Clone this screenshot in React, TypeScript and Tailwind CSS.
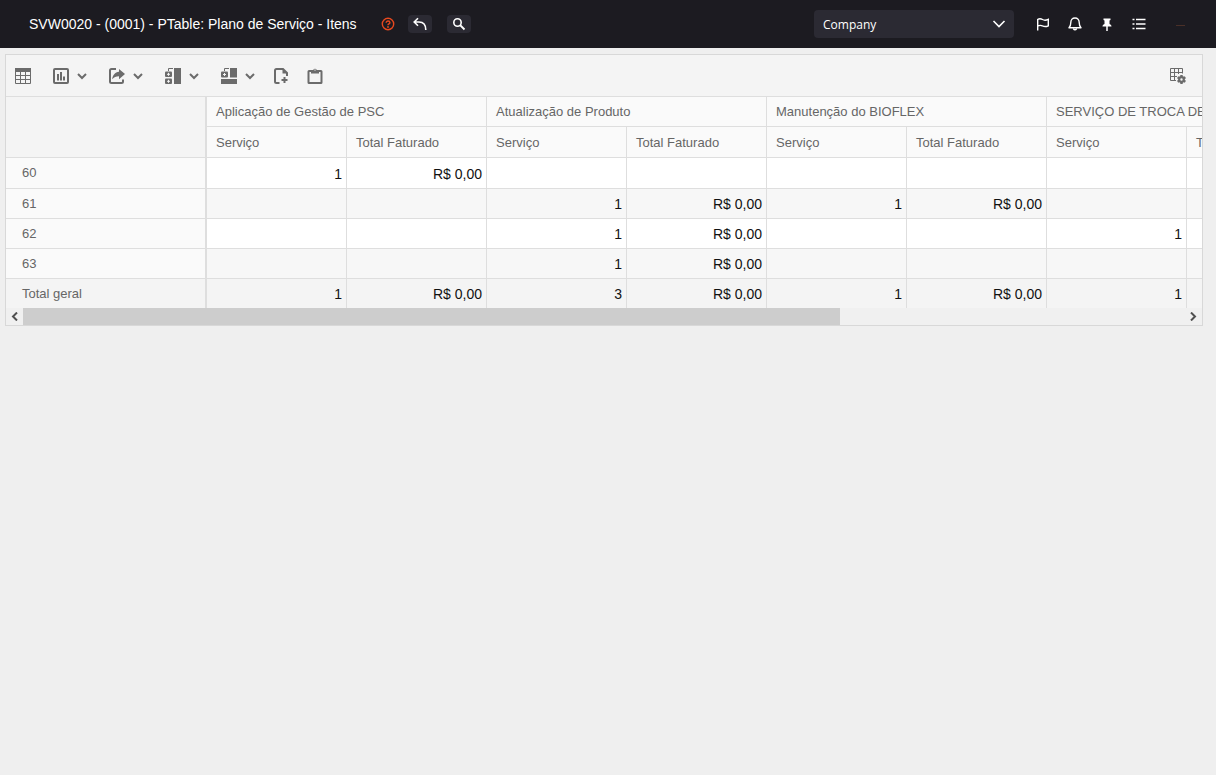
import React from 'react';

type Cell = string | null;

interface Row {
  label: string;
  cells: Cell[];
}

const GROUPS = [
  'Aplicação de Gestão de PSC',
  'Atualização de Produto',
  'Manutenção do BIOFLEX',
  'SERVIÇO DE TROCA DE',
];

const ROWS: Row[] = [
  { label: '60', cells: ['1', 'R$ 0,00', null, null, null, null, null, null] },
  { label: '61', cells: [null, null, '1', 'R$ 0,00', '1', 'R$ 0,00', null, null] },
  { label: '62', cells: [null, null, '1', 'R$ 0,00', null, null, '1', 'R$ 0,00'] },
  { label: '63', cells: [null, null, '1', 'R$ 0,00', null, null, null, null] },
];

const TOTAL: Row = {
  label: 'Total geral',
  cells: ['1', 'R$ 0,00', '3', 'R$ 0,00', '1', 'R$ 0,00', '1', 'R$ 0,00'],
};

interface IconProps {
  size?: number;
  children: React.ReactNode;
}

const Icon: React.FC<IconProps> = ({ size = 16, children }) => (
  <svg width={size} height={size} viewBox={`0 0 ${size} ${size}`} fill="none" stroke="currentColor" aria-hidden="true">
    {children}
  </svg>
);

const GridIcon = () => (
  <Icon>
    <rect x="0" y="0" width="16" height="4" fill="currentColor" stroke="none" />
    <path d="M.5 3v12.5h15V3M5.5 4v11M10.500 4v11M1 7.5h14M1 11.5h14" />
  </Icon>
);

const ChartIcon = () => (
  <Icon>
    <rect x="1" y="1" width="14" height="14" rx="1" strokeWidth="2" />
    <path d="M5 6v6.5M8 4v8.5M11 8.5v4" strokeWidth="2" />
  </Icon>
);

const ExportIcon = () => (
  <Icon>
    <path d="M7 1H2.5Q1 1 1 2.5v11Q1 15 2.5 15h10Q14 15 14 13.5V11.5" strokeWidth="2" />
    <path d="M10 1l6 5-6 5.2V8.2C7 8.2 4.800 9 3.2 11.3 3.6 7.300 6 4.2 10 3.8z" fill="currentColor" stroke="none" />
  </Icon>
);

const SubtotalsIcon = () => (
  <Icon>
    <rect x="9" y="0" width="7" height="16" fill="currentColor" stroke="none" />
    <path d="M3.5 3V.5H8" />
    <rect x="0" y="3.5" width="7" height="5.5" rx="1" fill="currentColor" stroke="none" />
    <rect x="0" y="10.5" width="7" height="5.5" rx="1" fill="currentColor" stroke="none" />
    <path d="M2 6.3h3M3.5 4.8v3M2 13.3h3M3.5 11.8v3" stroke="#f4f4f4" />
  </Icon>
);

const GrandTotalsIcon = () => (
  <Icon>
    <rect x="9" y="0" width="7" height="9.5" fill="currentColor" stroke="none" />
    <rect x="0" y="11" width="16" height="5" fill="currentColor" stroke="none" />
    <path d="M3.5 3V.5H8" />
    <rect x="0" y="3.5" width="7" height="6" rx="1" fill="currentColor" stroke="none" />
    <path d="M2 6.5h3M3.5 5v3" stroke="#f4f4f4" />
  </Icon>
);

const NewReportIcon = () => (
  <Icon>
    <path d="M6.5 15H3.5Q2 15 2 13.5V2.5Q2 1 3.5 1H10l4 4v3" strokeWidth="2" />
    <path d="M9.5 1v4.5H14z" fill="currentColor" stroke="none" />
    <path d="M11.5 9v6M8.5 12h6" strokeWidth="2" />
  </Icon>
);

const ClipboardIcon = () => (
  <Icon>
    <rect x="1.5" y="3" width="13" height="12" rx=".5" strokeWidth="2" />
    <path d="M4 2h2.2a2 2 0 0 1 3.6 0H12v3.5H4z" fill="currentColor" stroke="none" />
    <circle cx="8" cy="2" r=".7" fill="#f4f4f4" stroke="none" />
  </Icon>
);

const FieldListIcon = () => (
  <Icon>
    <path d="M6 12.5H.5V.5h12v5M.5 4.5h12M.5 8.5H7M4.5.5v12M8.5.5v5.5" />
    <circle cx="11.5" cy="11.5" r="2.300" strokeWidth="2.200" />
    <path d="M11.5 7v2M11.5 14v2M7.600 9.250l1.700 1M13.700 12.750l1.700 1M7.600 13.750l1.700-1M13.700 10.250l1.700-1" strokeWidth="2.400" />
  </Icon>
);

const ChevronIcon = () => (
  <Icon size={10}>
    <path d="M1 3l4 4 4-4" strokeWidth="2" />
  </Icon>
);

const HelpIcon = () => (
  <Icon size={14}>
    <circle cx="7" cy="7" r="5.7" strokeWidth="1.4" />
    <path d="M5.2 5.7c0-2.3 3.7-2.2 3.7 0C8.9 7 7 6.8 7 8.2" strokeWidth="1.4" />
    <circle cx="7" cy="10" r=".9" fill="currentColor" stroke="none" />
  </Icon>
);

const BackIcon = () => (
  <Icon size={14}>
    <path d="M5 1.300L1.200 5 5 8.700M1.5 5H6c4.500 0 6.800 3 6.800 8" strokeWidth="1.600" />
  </Icon>
);

const SearchIcon = () => (
  <Icon size={14}>
    <circle cx="5.500" cy="5.500" r="3.700" strokeWidth="1.600" />
    <path d="M8 8l4.500 4.500" strokeWidth="1.800" />
  </Icon>
);

const FlagIcon = () => (
  <Icon size={14}>
    <path d="M1.700 13.500V2M1.700 2.300c2-.9 3.300-.7 4.800.2 1.700 1 3.400 1 5.800-.2v6.500c-2.200 1.100-4 1-5.800.1-1.500-.8-2.800-.9-4.800.1" strokeWidth="1.400" />
  </Icon>
);

const BellIcon = () => (
  <Icon size={14}>
    <path d="M1 10.700h12c-1.300-1.200-1.800-2-1.800-5.200C11.200 2.500 9.500 1 7 1S2.800 2.500 2.800 5.500c0 3.200-.5 4-1.800 5.200z" strokeWidth="1.400" strokeLinejoin="round" />
    <path d="M5.300 11.5q1.700 2.500 3.400 0" strokeWidth="1.400" />
  </Icon>
);

const PinIcon = () => (
  <Icon size={14}>
    <path d="M3.500 1.500h7V3l-1 .5V7c1.300.6 2 1.500 2 2.500h-9c0-1 .7-1.900 2-2.500V3.500l-1-.5z" fill="currentColor" stroke="none" />
    <path d="M7 9v5" strokeWidth="1.500" />
  </Icon>
);

const ListIcon = () => (
  <Icon size={14}>
    <path d="M4 2.500h9.500M4 7h9.500M4 11.500h9.500M.500 2.500h2M.500 7h2M.500 11.500h2" strokeWidth="1.700" />
  </Icon>
);

interface ToolButtonProps {
  label: string;
  menu?: boolean;
  children: React.ReactNode;
}

const ToolButton: React.FC<ToolButtonProps> = ({ label, menu, children }) => (
  <button type="button" aria-label={label} className="flex items-center gap-2 hover:text-black">
    {children}
    {menu && <ChevronIcon />}
  </button>
);

const Header = () => (
  <header className="flex h-12 items-center bg-[#1c1b21] pl-[29px] pr-[31px] text-white">
    <h1 className="whitespace-nowrap text-[14px]">SVW0020 - (0001) - PTable: Plano de Serviço - Itens</h1>
    <button type="button" aria-label="Ajuda" className="ml-6 text-[#e8491f]">
      <HelpIcon />
    </button>
    <button type="button" aria-label="Voltar" className="ml-[13px] flex h-[18px] w-6 items-center justify-center rounded bg-[#2b2a33]">
      <BackIcon />
    </button>
    <button type="button" aria-label="Pesquisar" className="ml-[15px] flex h-[18px] w-6 items-center justify-center rounded bg-[#2b2a33]">
      <SearchIcon />
    </button>

    <div className="ml-auto grid w-[200px] items-center">
      <select
        aria-label="Company"
        className="col-start-1 row-start-1 h-7 appearance-none rounded bg-[#2b2a33] px-[9px] pt-0.5 font-['Open_Sans',sans-serif] text-[12px] outline-none"
      >
        <option>Company</option>
      </select>
      <svg className="pointer-events-none col-start-1 row-start-1 mr-2 justify-self-end" width="14" height="14" viewBox="0 0 14 14" fill="none" stroke="currentColor" strokeWidth="1.600" aria-hidden="true">
        <path d="M1.500 4l5.500 5.500L12.500 4" />
      </svg>
    </div>

    <nav className="ml-[22px] flex items-center gap-[18px]">
      <button type="button" aria-label="Marcar"><FlagIcon /></button>
      <button type="button" aria-label="Notificações"><BellIcon /></button>
      <button type="button" aria-label="Fixar"><PinIcon /></button>
      <button type="button" aria-label="Menu"><ListIcon /></button>
    </nav>
    <button type="button" aria-label="Minimizar" className="ml-[30px] flex h-4 w-[9px] items-center pt-0.5">
      <span className="h-px w-full bg-[#4a3028]"></span>
    </button>
  </header>
);

const Toolbar = () => (
  <div className="flex h-[42px] items-center border-b border-[#dedede] bg-[#f4f4f4] pl-[9px] pr-4 pt-px text-[#6b6b6b]">
    <ToolButton label="Grade"><GridIcon /></ToolButton>
    <div className="ml-[22px] flex items-center gap-[22px]">
      <ToolButton label="Gráfico" menu><ChartIcon /></ToolButton>
      <ToolButton label="Exportar" menu><ExportIcon /></ToolButton>
      <ToolButton label="Subtotais" menu><SubtotalsIcon /></ToolButton>
      <ToolButton label="Totais gerais" menu><GrandTotalsIcon /></ToolButton>
    </div>
    <div className="ml-[18px] flex gap-[18px]">
      <ToolButton label="Novo relatório"><NewReportIcon /></ToolButton>
      <ToolButton label="Copiar"><ClipboardIcon /></ToolButton>
    </div>
    <div className="ml-auto flex">
      <ToolButton label="Lista de campos"><FieldListIcon /></ToolButton>
    </div>
  </div>
);

const headCell = 'border-b border-r border-[#dedede] bg-[#fafafa] pl-[9px] text-left font-normal';
const rowHead = 'border-r-2 border-[#dedede] pl-4 text-left text-[13px] font-normal text-[#666666]';
const valueCell = 'border-r border-[#dedede] pr-1 pt-0.5 text-right text-[14px]';

const PivotTable = () => (
  <div className="overflow-hidden">
    <table className="w-[1321px] table-fixed border-separate border-spacing-0 whitespace-nowrap">
      <colgroup>
        <col className="w-[201px]" />
        {GROUPS.map(g => (
          <React.Fragment key={g}>
            <col className="w-[140px]" />
            <col className="w-[140px]" />
          </React.Fragment>
        ))}
      </colgroup>
      <thead className="text-[13px] text-[#666666]">
        <tr className="h-[30px]">
          <td rowSpan={2} className="border-b border-r-2 border-[#dedede] bg-[#f4f4f4]"></td>
          {GROUPS.map(g => (
            <th key={g} colSpan={2} scope="colgroup" className={headCell}>{g}</th>
          ))}
        </tr>
        <tr className="h-[31px]">
          {GROUPS.map(g => (
            <React.Fragment key={g}>
              <th scope="col" className={`${headCell} pt-0.5`}>Serviço</th>
              <th scope="col" className={`${headCell} pt-0.5`}>Total Faturado</th>
            </React.Fragment>
          ))}
        </tr>
      </thead>
      <tbody>
        {ROWS.map((row, i) => (
          <tr key={row.label} className={i === 0 ? 'h-[31px] bg-white' : i % 2 ? 'h-[30px] bg-[#f7f7f7]' : 'h-[30px] bg-white'}>
            <th scope="row" className={`${rowHead} border-b bg-[#fafafa]`}>{row.label}</th>
            {row.cells.map((cell, c) => (
              <td key={c} className={`${valueCell} border-b`}>{cell}</td>
            ))}
          </tr>
        ))}
      </tbody>
      <tfoot>
        <tr className="h-[29px] bg-[#f4f4f4]">
          <th scope="row" className={rowHead}>{TOTAL.label}</th>
          {TOTAL.cells.map((cell, c) => (
            <td key={c} className={valueCell}>{cell}</td>
          ))}
        </tr>
      </tfoot>
    </table>
  </div>
);

const ScrollBar = () => (
  <div className="flex h-[17px] bg-[#f0f0f0] text-[#505050]">
    <button type="button" aria-label="Rolar para a esquerda" className="flex w-[17px] items-center justify-center">
      <Icon size={9}><path d="M7 .5L3 4.5 7 8.5" strokeWidth="2" /></Icon>
    </button>
    <div className="flex flex-1">
      <div className="grow-[26] bg-[#cdcdcd]"></div>
      <div className="grow-[11]"></div>
    </div>
    <button type="button" aria-label="Rolar para a direita" className="flex w-[17px] items-center justify-center">
      <Icon size={9}><path d="M2 .5L6 4.5 2 8.5" strokeWidth="2" /></Icon>
    </button>
  </div>
);

const App: React.FC = () => {
  return (
    <div className="min-h-screen bg-[#efefef] font-['Liberation_Sans',Arial,sans-serif] text-[#111111]">
      <Header />
      <main className="pb-6 pl-[5px] pr-[13px] pt-[6px]">
        <section className="border border-[#d8d8d8]">
          <Toolbar />
          <PivotTable />
          <ScrollBar />
        </section>
      </main>
    </div>
  );
};

export default App;
